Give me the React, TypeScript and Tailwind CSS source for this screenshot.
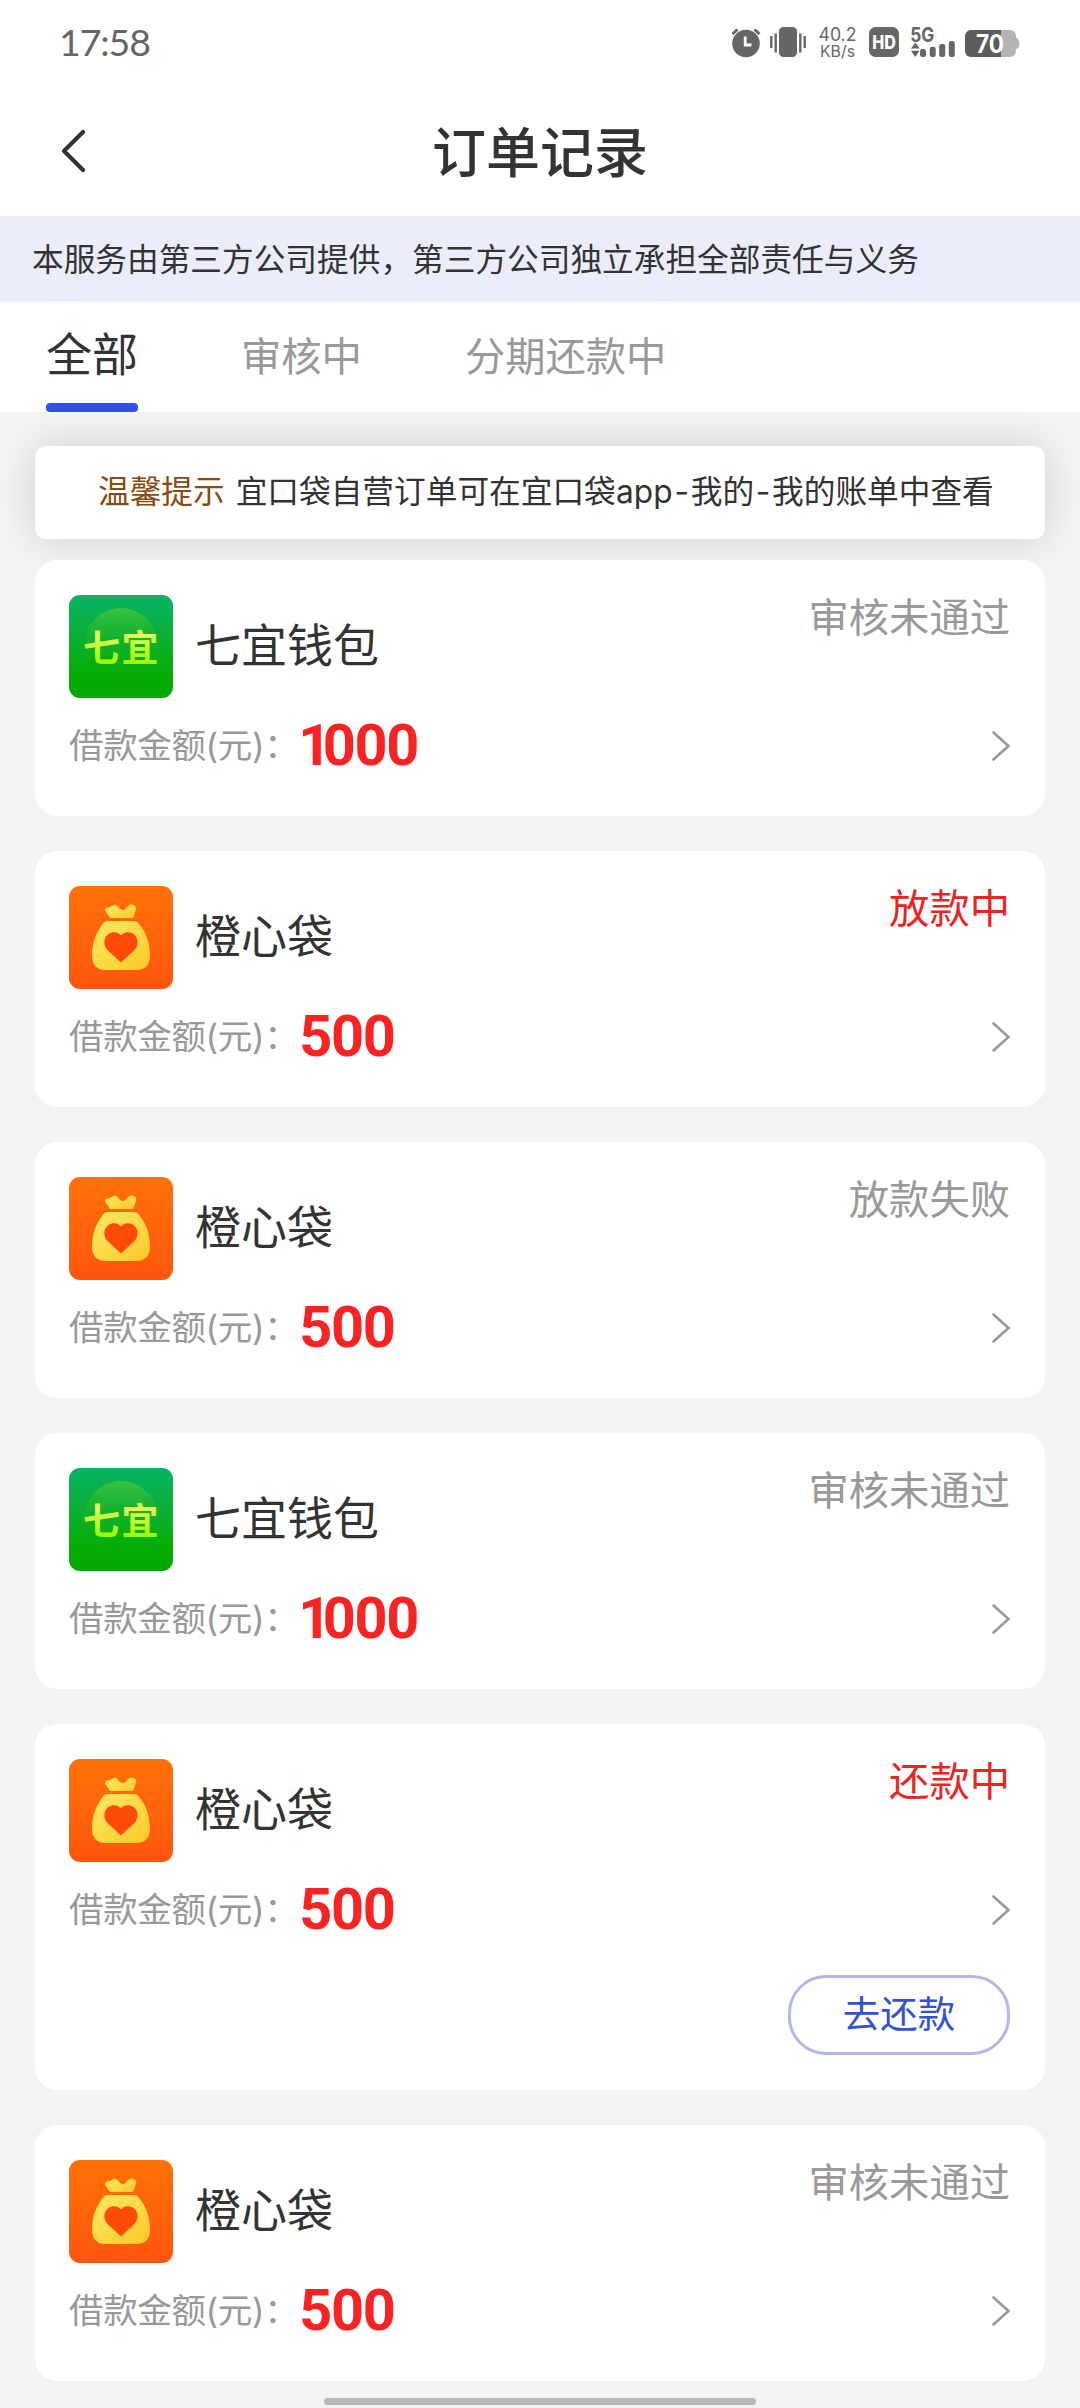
import React from 'react';

type Brand = 'qiyi' | 'orange';

interface Order {
  id: number;
  brand: Brand;
  name: string;
  amount: number;
  status: string;
  active?: boolean;
  repayable?: boolean;
}

const orders: Order[] = [
  { id: 1, brand: 'qiyi', name: '七宜钱包', amount: 1000, status: '审核未通过' },
  { id: 2, brand: 'orange', name: '橙心袋', amount: 500, status: '放款中', active: true },
  { id: 3, brand: 'orange', name: '橙心袋', amount: 500, status: '放款失败' },
  { id: 4, brand: 'qiyi', name: '七宜钱包', amount: 1000, status: '审核未通过' },
  { id: 5, brand: 'orange', name: '橙心袋', amount: 500, status: '还款中', active: true, repayable: true },
  { id: 6, brand: 'orange', name: '橙心袋', amount: 500, status: '审核未通过' },
];

const tabs = ['全部', '审核中', '分期还款中'];

const StatusIcons: React.FC = () => (
  <svg width="300" height="36" viewBox="0 0 300 36" fill="#666">
    {/* alarm */}
    <circle cx="17" cy="19.5" r="13.8" />
    <path d="M3.5 10 L8.5 5.5 M30.5 10 L25.5 5.5" stroke="#666" strokeWidth="3" />
    <path d="M16.2 12.5 V21 H22.5" stroke="#fff" strokeWidth="2.8" fill="none" />
    {/* vibrate */}
    <rect x="50" y="3" width="18" height="30" rx="4.5" />
    <path d="M42.3 12 V24 M46.7 9.5 V28.5 M71.3 9.5 V28.5 M75.7 12 V24" stroke="#666" strokeWidth="2.4" />
    {/* network speed */}
    <text x="89.5" y="17" fontSize="18" textLength="38" lengthAdjust="spacingAndGlyphs" className="font-['Inter',sans-serif]">40.2</text>
    <text x="91" y="33" fontSize="15.5" textLength="35" lengthAdjust="spacingAndGlyphs" className="font-['Inter',sans-serif]">KB/s</text>
    {/* HD */}
    <rect x="140" y="3" width="30" height="30" rx="6.5" />
    <text x="143.2" y="25" fontSize="18.5" fontWeight="800" fill="#fff" textLength="23.6" lengthAdjust="spacingAndGlyphs" className="font-['Inter',sans-serif]">HD</text>
    {/* signal */}
    <text x="181.3" y="17.5" fontSize="20" fontWeight="700" textLength="24" lengthAdjust="spacingAndGlyphs" className="font-['Inter',sans-serif]">5G</text>
    <path d="M182 24.5 L186.3 18.5 L190.6 24.5 Z M182 26.8 L186.3 33 L190.6 26.8 Z" />
    <rect x="191" y="25" width="6" height="8" rx="2.2" />
    <rect x="200.7" y="22.7" width="6" height="10.3" rx="2.2" />
    <rect x="210.2" y="20" width="6" height="13" rx="2.2" />
    <rect x="219.8" y="17" width="6" height="16" rx="2.2" />
    {/* battery */}
    <path d="M270 6 H281 a6 6 0 0 1 6 6 V14 q3.3 0.5 3.3 5.5 t-3.3 5.5 V27 a6 6 0 0 1 -6 6 H270 Z" fill="#b4b4b4" />
    <path d="M242 6 H272 V33 H242 a6 6 0 0 1 -6 -6 V12 a6 6 0 0 1 6 -6 Z" fill="#5c5c5c" />
    <text x="247" y="28.5" fontSize="25" fontWeight="700" fill="#fff" textLength="28" lengthAdjust="spacingAndGlyphs" className="font-['Inter',sans-serif]">70</text>
  </svg>
);

const QiyiLogo: React.FC = () => (
  <svg width="104" height="103" viewBox="0 0 104 103" className="rounded-[11px]">
    <defs>
      <linearGradient id="qiyi-bg" x1="0" y1="0" x2="0" y2="1">
        <stop offset="0" stopColor="#05b464" />
        <stop offset="0.35" stopColor="#0bb03c" />
        <stop offset="0.75" stopColor="#06ad06" />
        <stop offset="1" stopColor="#04a804" />
      </linearGradient>
      <linearGradient id="qiyi-disc" x1="0" y1="0" x2="0" y2="1">
        <stop offset="0" stopColor="#3cc244" />
        <stop offset="0.5" stopColor="#1cb41c" stopOpacity="0.3" />
        <stop offset="1" stopColor="#06ad06" stopOpacity="0" />
      </linearGradient>
      <linearGradient id="qiyi-text" x1="0" y1="0" x2="0" y2="1">
        <stop offset="0.2" stopColor="#f2f86a" />
        <stop offset="0.85" stopColor="#96fa00" />
      </linearGradient>
    </defs>
    <rect width="104" height="103" fill="url(#qiyi-bg)" />
    <circle cx="52" cy="49" r="36" fill="url(#qiyi-disc)" />
    <text x="14" y="66.5" fontSize="37" fontWeight="700" letterSpacing="1.5" fill="url(#qiyi-text)" className="font-['Noto_Sans_CJK_SC',sans-serif]">七宜</text>
  </svg>
);

const OrangeLogo: React.FC = () => (
  <svg width="104" height="103" viewBox="0 0 104 103" className="rounded-[11px]">
    <defs>
      <linearGradient id="orange-bg" x1="0" y1="0" x2="0" y2="1">
        <stop offset="0" stopColor="#ff7208" />
        <stop offset="1" stopColor="#ff560e" />
      </linearGradient>
      <linearGradient id="orange-bag" x1="0" y1="0" x2="1" y2="1">
        <stop offset="0" stopColor="#ffe566" />
        <stop offset="0.5" stopColor="#fddb45" />
        <stop offset="1" stopColor="#fdc52a" />
      </linearGradient>
    </defs>
    <rect width="104" height="103" fill="url(#orange-bg)" />
    <path
      d="M41 32 L36 24.5 Q35.5 22.5 38 21.5 Q41.5 21.5 43.5 19.5 Q46 18 48.5 20 Q51.5 24.5 54.5 24 Q57 23.5 59 20 Q62 17.5 65.5 19.5 Q68.5 22 66.5 25 L64.5 31 Q63.8 32 62.5 32 Z"
      fill="url(#orange-bag)"
    />
    <path
      d="M38 35 H65.5 Q68 35 70 38 C77 46 81 57 81 70 Q80.5 84 67 84 H37 Q23.5 84 23 70 C23 57 27 46 34.5 37 Q36 35 38 35 Z"
      fill="url(#orange-bag)"
    />
    <path
      d="M52 76.5 L38.5 64 C34 59 34.5 51.5 39.5 48 C44 45 49.5 46 52 49.5 C54.5 46 60 45 64.5 48 C69.5 51.5 70 59 65.5 64 Z"
      fill="#ff4a08"
    />
  </svg>
);

// the leading "1" is set tighter than the other figures
const Amount: React.FC<{ value: number }> = ({ value }) => (
  <span className="ml-px font-['Roboto',sans-serif] font-bold text-[57.6px] leading-[62px] tracking-[-1.3px] text-[#fa2323]">
    {String(value).split('').map((digit, i) => (
      <span key={i} className={digit === '1' ? '-ml-px tracking-[-8.5px]' : ''}>{digit}</span>
    ))}
  </span>
);

const OrderCard: React.FC<{ order: Order }> = ({ order }) => (
  <div className={`bg-white rounded-[22px] pl-[34px] pr-[35px] pt-[35px] ${order.repayable ? 'h-[366px]' : 'h-[256px]'}`}>
    <div className="flex h-[103px]">
      {order.brand === 'qiyi' ? <QiyiLogo /> : <OrangeLogo />}
      <div className="ml-[22px] flex-1 h-[103px] leading-[100px] text-[46px] text-[#333]">{order.name}</div>
      <div className={`h-[46px] leading-[46px] text-[40.3px] ${order.active ? 'text-[#ee2222]' : 'text-[#999]'}`}>
        {order.status}
      </div>
    </div>
    <div className="flex items-center mt-[17px] h-[62px]">
      <span className="text-[34.56px] leading-[62px] tracking-[-0.4px] text-[#999]">借款金额(元)：</span>
      <Amount value={order.amount} />
      <svg width="20" height="32" viewBox="0 0 20 32" className="ml-auto -mr-px">
        <path d="M2.5 2.5 L17.5 16 L2.5 29.5" fill="none" stroke="#999" strokeWidth="2.6" strokeLinecap="round" />
      </svg>
    </div>
    {order.repayable && (
      <div className="flex justify-end mt-[34px]">
        <button className="w-[222px] h-[80px] rounded-[38px] border-[3px] border-[#afb9ea] text-[37.44px] leading-[74px] pb-0.5 text-[#3350d8]">
          去还款
        </button>
      </div>
    )}
  </div>
);

const App: React.FC = () => {
  return (
    <div className="w-[1080px] h-[2408px] overflow-hidden flex flex-col bg-[#f3f3f3] font-['Inter','Noto_Sans_CJK_SC',sans-serif]">
      <div className="bg-white shrink-0">
        <div className="h-[84px] flex items-start justify-between pl-[59px] pr-[51px]">
          <span className="font-['Lato',sans-serif] text-[37.5px] leading-[84px] tracking-[-1.1px] text-[#666]">17:58</span>
          <div className="pt-6">
            <StatusIcons />
          </div>
        </div>
        <header className="h-[132px] grid grid-cols-[1fr_auto_1fr] items-center px-[60px]">
          <svg width="28" height="46" viewBox="0 0 28 46" className="mt-0.5">
            <path d="M23 4 L4 23 L23 42" fill="none" stroke="#333" strokeWidth="4.2" strokeLinecap="round" strokeLinejoin="round" />
          </svg>
          <h1 className="text-[54px] leading-[124px] pt-2 font-medium text-[#333]">订单记录</h1>
        </header>
      </div>

      <div className="h-[86px] shrink-0 bg-[#ebedfd] pl-8 text-[31.68px] leading-[87px] text-[#333]">
        本服务由第三方公司提供，第三方公司独立承担全部责任与义务
      </div>

      <nav className="h-[110px] shrink-0 bg-white flex gap-[103px] pl-[46px]">
        {tabs.map((tab, i) => (
          <div key={tab} className="flex flex-col justify-between">
            <span className={i === 0 ? 'pt-[3px] text-[46px] leading-[98px] text-[#333]' : 'text-[40.3px] leading-[110px] text-[#999]'}>
              {tab}
            </span>
            {i === 0 && <span className="h-[9px] w-[92px] rounded-[4px] bg-[#3350e8]" />}
          </div>
        ))}
      </nav>

      <main className="px-[35px] pt-[34px]">
        <div className="h-[93px] rounded-[11px] bg-white shadow-[0_0_40px_rgba(0,0,0,0.15)] flex items-center text-[31.68px] leading-[88px] whitespace-nowrap pl-[63px] pb-0.5">
          <span className="text-[#8a4a10]">温馨提示</span>
          <span className="ml-[11px] text-[#333]">
            宜口袋自营订单可在宜口袋<span className="inline-block w-[57px] text-center">app</span>
            <span className="inline-block w-[18px] text-center">-</span>我的
            <span className="inline-block w-[18px] text-center">-</span>我的账单中查看
          </span>
        </div>
        <div className="relative mt-[21px] flex flex-col gap-[35px]">
          {orders.map((order) => (
            <OrderCard key={order.id} order={order} />
          ))}
        </div>
      </main>

      <div className="mt-[17px] mx-auto w-[432px] h-[7px] shrink-0 rounded-full bg-[#b8b8b8]" />
    </div>
  );
};

export default App;
